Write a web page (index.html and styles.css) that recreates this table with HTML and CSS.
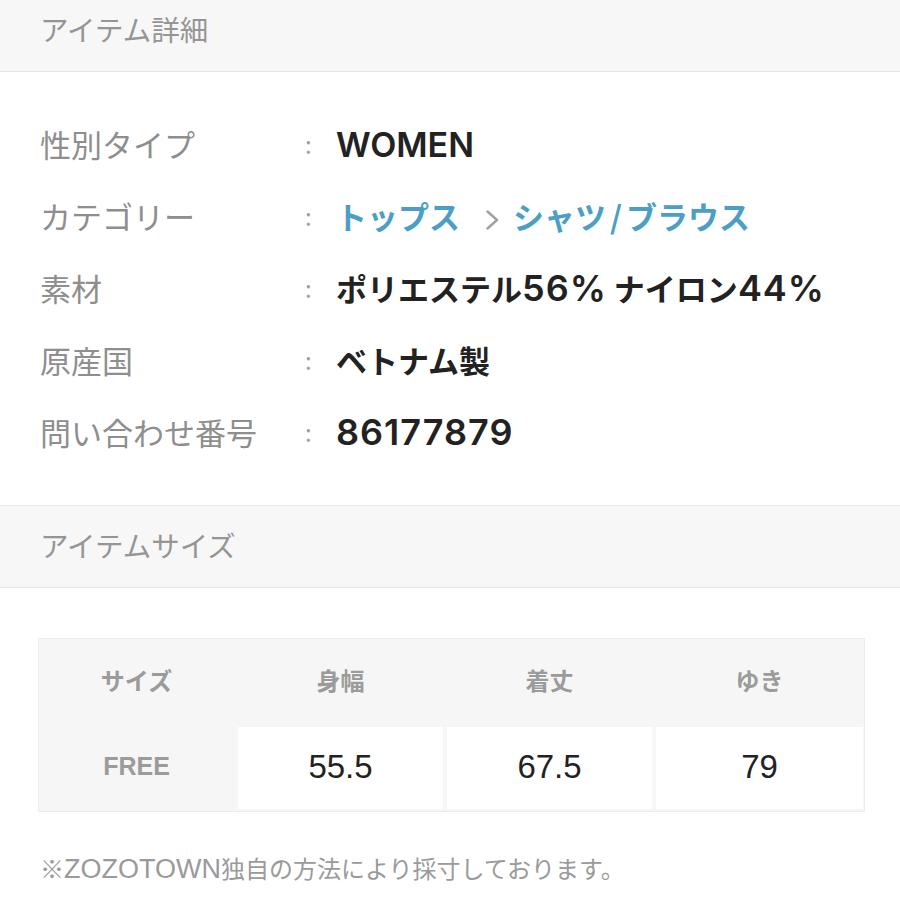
FILE: index.html
```html
<!DOCTYPE html>
<html lang="ja">
<head>
<meta charset="utf-8">
<link rel="stylesheet" href="styles.css">
</head>
<body>
<div class="section-head first">アイテム詳細</div>
<div class="details">
  <div class="row"><div class="label">性別タイプ</div><div class="colon">:</div><div class="value"><span class="en">WOMEN</span></div></div>
  <div class="row"><div class="label">カテゴリー</div><div class="colon">:</div><div class="value"><span class="link">トップス</span><svg class="chev" width="13" height="20" viewBox="0 0 13 20"><polyline points="1.5,1.5 11,10 1.5,18.5" fill="none" stroke="#a0a0a0" stroke-width="2.4" stroke-linecap="round" stroke-linejoin="round"/></svg><span class="link">シャツ<span class="slash">/</span>ブラウス</span></div></div>
  <div class="row"><div class="label">素材</div><div class="colon">:</div><div class="value">ポリエステル<span class="en num">56%</span> ナイロン<span class="en num">44%</span></div></div>
  <div class="row"><div class="label">原産国</div><div class="colon">:</div><div class="value">ベトナム製</div></div>
  <div class="row"><div class="label">問い合わせ番号</div><div class="colon">:</div><div class="value"><span class="en num">86177879</span></div></div>
</div>
<div class="section-head second">アイテムサイズ</div>
<div class="size-table">
  <div class="th head">サイズ</div>
  <div class="th head">身幅</div>
  <div class="th head">着丈</div>
  <div class="th head">ゆき</div>
  <div class="th size">FREE</div>
  <div class="td">55.5</div>
  <div class="td">67.5</div>
  <div class="td">79</div>
</div>
<p class="note">※<span class="note-en">ZOZOTOWN</span>独自の方法により採寸しております。</p>
</body>
</html>
```
FILE: styles.css
```css
* { box-sizing: border-box; }
html, body {
  margin: 0;
  padding: 0;
  background: #fff;
  font-family: "Noto Sans CJK JP", "Noto Sans", sans-serif;
}
.section-head {
  background: #f7f7f7;
  color: #959595;
  font-size: 28.5px;
  padding-left: 40px;
  border-bottom: 1px solid #e6e6e6;
}
.section-head.first {
  height: 72px;
  line-height: 58px;
}
.section-head.second {
  height: 83px;
  line-height: 78px;
  border-top: 1px solid #e6e6e6;
}
.details {
  padding: 35px 0 38px 40px;
}
.row {
  display: grid;
  grid-template-columns: 265px 31px 1fr;
  height: 72px;
  align-items: center;
  font-size: 31px;
}
.label {
  color: #8e8e8e;
  white-space: nowrap;
}
.colon {
  color: #a0a0a0;
  font-size: 24px;
}
.value {
  color: #222;
  font-weight: 600;
  white-space: nowrap;
}
.en {
  font-family: "Inter", "Liberation Sans", sans-serif;
  font-size: 34px;
  font-weight: 600;
}
.en.num {
  font-size: 36px;
  letter-spacing: 1px;
}
.link { color: #4b9fc6; }
.slash { padding: 0 4px; }
.chev {
  display: inline-block;
  vertical-align: -1px;
  margin: 0 14px 0 26px;
}
.size-table {
  margin: 50px 0 0 38px;
  width: 827px;
  display: grid;
  grid-template-columns: 195px 205px 205px 207px;
  grid-template-rows: 87px 82px;
  column-gap: 4px;
  row-gap: 1px;
  padding: 0 1px 2px 0;
  background: #f6f6f6;
  border: 1px solid #ececec;
}
.th, .td {
  display: flex;
  align-items: center;
  justify-content: center;
}
.th {
  color: #9b9b9b;
  font-weight: 700;
  font-size: 24px;
}
.th.head { padding-bottom: 6px; }
.th.size {
  font-family: "Liberation Sans", sans-serif;
  font-size: 25px;
  padding-bottom: 4px;
}
.td {
  background: #fff;
  color: #222;
  font-size: 33px;
  font-family: "Liberation Sans", "Noto Sans CJK JP", sans-serif;
  padding-bottom: 2px;
}
.note {
  margin: 40px 0 0 40px;
  color: #9a9a9a;
  font-size: 24px;
  line-height: 32px;
}
.note-en {
  font-family: "Liberation Sans", sans-serif;
  font-size: 27px;
}
```
